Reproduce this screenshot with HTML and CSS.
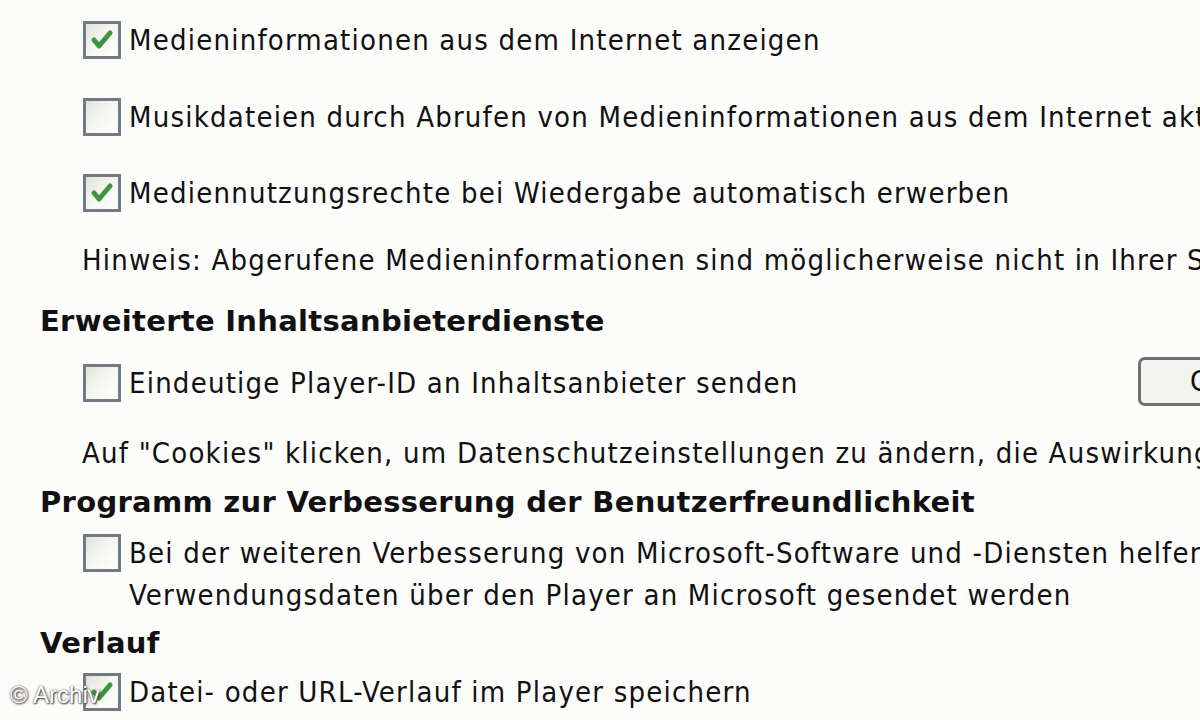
FILE: index.html
```html
<!DOCTYPE html>
<html lang="de">
<head>
<meta charset="utf-8">
<title>Datenschutz</title>
<link rel="stylesheet" href="styles.css">
</head>
<body>
<div class="page">
  <div class="opt first">
    <span class="box checked"><svg viewBox="0 0 32 32"><path d="M8 16 L13 22 L24 9" /></svg></span>
    <span class="label">Medieninformationen aus dem Internet anzeigen</span>
  </div>
  <div class="opt g35">
    <span class="box"></span>
    <span class="label">Musikdateien durch Abrufen von Medieninformationen aus dem Internet aktualisieren</span>
  </div>
  <div class="opt g34">
    <span class="box checked"><svg viewBox="0 0 32 32"><path d="M8 16 L13 22 L24 9" /></svg></span>
    <span class="label">Mediennutzungsrechte bei Wiedergabe automatisch erwerben</span>
  </div>
  <p class="note g25">Hinweis: Abgerufene Medieninformationen sind möglicherweise nicht in Ihrer Sprache verfügbar.</p>
  <h2 class="head g19">Erweiterte Inhaltsanbieterdienste</h2>
  <div class="opt g20 with-btn">
    <span class="box"></span>
    <span class="label">Eindeutige Player-ID an Inhaltsanbieter senden</span>
    <span class="btn">Cookies...</span>
  </div>
  <p class="note g28">Auf "Cookies" klicken, um Datenschutzeinstellungen zu ändern, die Auswirkungen auf Websites haben.</p>
  <h2 class="head g7">Programm zur Verbesserung der Benutzerfreundlichkeit</h2>
  <div class="opt g9">
    <span class="box"></span>
    <span class="label">Bei der weiteren Verbesserung von Microsoft-Software und -Diensten helfen, indem<br>Verwendungsdaten über den Player an Microsoft gesendet werden</span>
  </div>
  <h2 class="head g6">Verlauf</h2>
  <div class="opt g7">
    <span class="box checked"><svg viewBox="0 0 32 32"><path d="M8 16 L13 22 L24 9" /></svg></span>
    <span class="label">Datei- oder URL-Verlauf im Player speichern</span>
  </div>
  <div class="mark">© Archiv</div>
</div>
</body>
</html>
```
FILE: styles.css
```css
html, body {
  margin: 0;
  padding: 0;
  background: #fcfcfb;
  overflow: hidden;
}
.page {
  width: 1200px;
  height: 720px;
  overflow: hidden;
  position: relative;
  padding: 0 0 0 40px;
  box-sizing: border-box;
  font-family: "DejaVu Sans Condensed", "DejaVu Sans", sans-serif;
  font-size: 29px;
  letter-spacing: 1.2px;
  line-height: 42px;
  color: #111;
  white-space: nowrap;
}
.opt {
  display: flex;
  align-items: flex-start;
  padding-left: 43px;
}
.first { margin-top: 19px; }
.box {
  flex: none;
  width: 32px;
  height: 32px;
  margin-top: 2px;
  margin-right: 8px;
  border: 3px solid #737b82;
  background: linear-gradient(135deg, #e2e2dc 0%, #f5f5f1 45%, #ffffff 100%);
  display: flex;
}
.box svg {
  width: 32px;
  height: 32px;
}
.box path {
  fill: none;
  stroke: #3f953f;
  stroke-width: 5;
  stroke-linecap: round;
  stroke-linejoin: round;
}
.label { display: block; }
.note {
  margin: 0;
  padding-left: 42px;
}
.head {
  margin: 0;
  font-family: "DejaVu Sans", sans-serif;
  font-size: 29px;
  letter-spacing: 0.3px;
  font-weight: bold;
  line-height: 42px;
}
.with-btn { position: relative; }
.btn {
  position: absolute;
  left: 1098px;
  top: -5px;
  width: 200px;
  height: 43px;
  border: 3px solid #707070;
  border-radius: 7px;
  background: #f3f3ef;
  padding-left: 49px;
  box-sizing: content-box;
}
.g35 { margin-top: 35px; }
.g34 { margin-top: 34px; }
.g25 { margin-top: 25px; }
.g20 { margin-top: 20px; }
.g19 { margin-top: 19px; }
.g28 { margin-top: 28px; }
.g9 { margin-top: 9px; }
.g7 { margin-top: 7px; }
.g6 { margin-top: 6px; }
.mark {
  position: absolute;
  left: 10px;
  top: 681px;
  font-family: "Liberation Sans", Arial, sans-serif;
  font-size: 24px;
  letter-spacing: 0;
  line-height: 28px;
  color: #ffffff;
  text-shadow: 0 0 2px #444, 1px 1px 2px #333;
}
```
